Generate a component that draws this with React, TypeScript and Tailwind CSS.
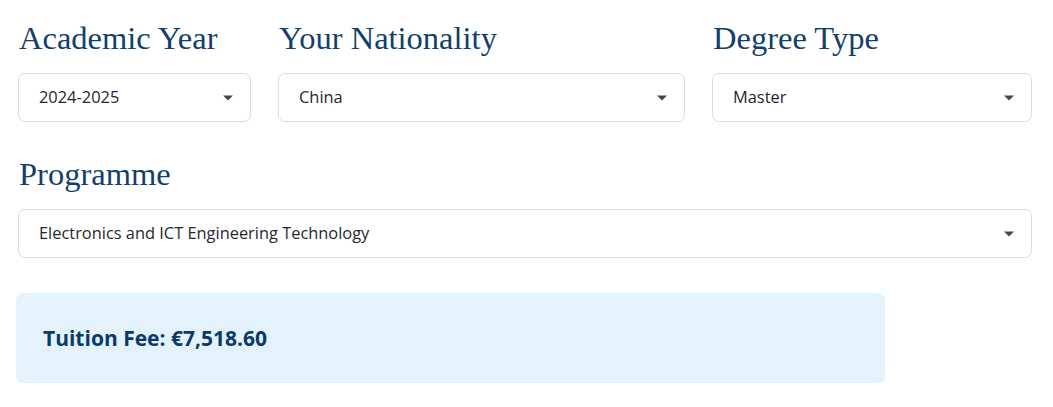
const serif = "font-['Liberation_Serif',serif]";

function Caret() {
  return (
    <svg width="12" height="6" viewBox="0 0 12 6" className="shrink-0">
      <path d="M1 0.5 L11 0.5 L6 5.5 Z" fill="#464646" />
    </svg>
  );
}

function Field({ label, value }: { label: string; value: string }) {
  return (
    <div className="flex flex-col">
      <h2 className={`${serif} text-[32.5px] leading-[38px] text-[#123f6b] pt-[19px] pb-[16px] pl-[1px]`}>{label}</h2>
      <div className="h-[49px] flex items-center justify-between rounded-[7px] border border-[#dcdcdc] bg-white pl-[20px] pr-[16px]">
        <span className="text-[16.4px] text-[#262730]">{value}</span>
        <Caret />
      </div>
    </div>
  );
}

export default function App() {
  return (
    <div className="w-[1053px] h-[407px] bg-white font-['Open_Sans',sans-serif] overflow-hidden">
      <div className="pl-[18px] pr-[21px] pt-0">
        <div className="grid grid-cols-[233px_407px_320px] gap-[27px]">
          <Field label="Academic Year" value="2024-2025" />
          <Field label="Your Nationality" value="China" />
          <Field label="Degree Type" value="Master" />
        </div>
        <div className="mt-[14px]">
          <Field label="Programme" value="Electronics and ICT Engineering Technology" />
        </div>
      </div>
      <div className="ml-[16px] mt-[35px] w-[869px] h-[90px] rounded-[7px] bg-[#e3f2fd] flex items-center pl-[27px] pt-[2px]">
        <span className="text-[21px] font-bold text-[#0b3a66]">Tuition Fee: €7,518.60</span>
      </div>
    </div>
  );
}
